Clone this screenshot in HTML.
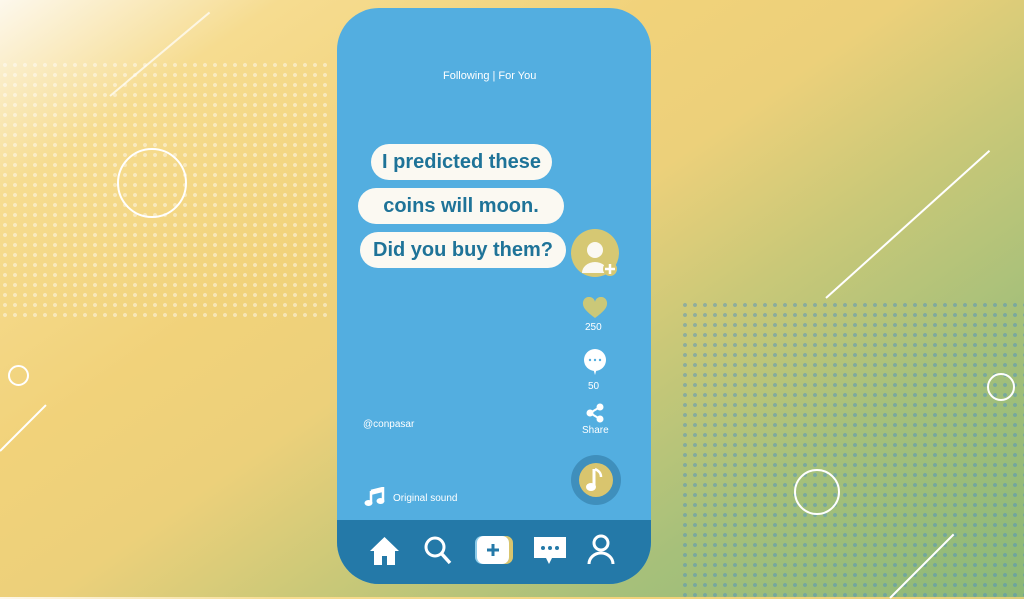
<!DOCTYPE html>
<html><head><meta charset="utf-8"><style>
body{margin:0;width:1024px;height:597px;overflow:hidden;position:relative;font-family:"Liberation Sans",sans-serif;
background:linear-gradient(145deg,#fdf8ec 0%,#f6dc90 15%,#f1d27a 35%,#ecd07a 48%,#c9c878 62%,#a6c07a 78%,#8cb878 100%);}
.dots{position:absolute;background-image:radial-gradient(circle,rgba(255,255,255,.55) 1.8px,transparent 2.2px);background-size:10px 10px}
.dots2{position:absolute;background-image:radial-gradient(circle,rgba(70,140,200,.55) 1.8px,transparent 2.2px);background-size:10px 10px}
.ring{position:absolute;border:2px solid #fff;border-radius:50%}
.line{position:absolute;height:2px;background:#fff;transform-origin:left center}
.phone{position:absolute;left:337px;top:8px;width:314px;height:576px;background:#53aee0;border-radius:42px;overflow:hidden}
.bar{position:absolute;left:0;bottom:0;width:100%;height:64px;background:#2479a8}
.bub{position:absolute;background:#fbf9f2;border-radius:18px;color:#1e7398;font-weight:bold;font-size:20px;text-align:center;line-height:36px;height:36px}
.w{position:absolute;color:#fff;font-size:10px}
</style></head><body>
<div class="dots" style="left:0;top:60px;width:330px;height:260px;opacity:.8"></div>
<div class="dots2" style="left:680px;top:300px;width:344px;height:297px;opacity:.8"></div>
<div class="ring" style="left:117px;top:148px;width:66px;height:66px"></div>
<div class="ring" style="left:8px;top:365px;width:17px;height:17px"></div>
<div class="ring" style="left:987px;top:373px;width:24px;height:24px"></div>
<div class="ring" style="left:794px;top:469px;width:42px;height:42px"></div>
<div class="line" style="left:826px;top:297px;width:220px;transform:rotate(-42deg)"></div>
<div class="line" style="left:0;top:450px;width:65px;transform:rotate(-45deg)"></div>
<div class="line" style="left:110px;top:95px;width:130px;transform:rotate(-40deg);opacity:.7"></div>
<div class="line" style="left:890px;top:597px;width:90px;transform:rotate(-45deg)"></div>
<div class="phone">
 <div class="w" style="left:106px;top:62px;font-size:11px">Following | For You</div>
 <div class="bub" style="left:34px;top:136px;width:181px">I predicted these</div>
 <div class="bub" style="left:21px;top:180px;width:206px">coins will moon.</div>
 <div class="bub" style="left:23px;top:224px;width:206px">Did you buy them?</div>
 <svg style="position:absolute;left:233px;top:220px" width="50" height="52"><circle cx="25" cy="25" r="24" fill="#d6c873"/><circle cx="25" cy="22" r="8" fill="#fbf9f2"/><path d="M12 45a13 11 0 0 1 26 0z" fill="#fbf9f2"/><circle cx="40" cy="41" r="7" fill="#d6c873"/><path d="M40 36v10M35 41h10" stroke="#fff" stroke-width="2.5"/></svg>
 <svg style="position:absolute;left:245px;top:289px" width="26" height="22"><path d="M13 21C5 15 1 11 1 7a6 6 0 0 1 12-2 6 6 0 0 1 12 2c0 4-4 8-12 14z" fill="#cbc878"/></svg>
 <div class="w" style="left:248px;top:314px">250</div>
 <svg style="position:absolute;left:245px;top:340px" width="26" height="28"><circle cx="13" cy="12" r="11" fill="#fff"/><path d="M11 20h4l-2 7z" fill="#fff"/><circle cx="8" cy="12" r="1.2" fill="#53aee0"/><circle cx="13" cy="12" r="1.2" fill="#53aee0"/><circle cx="18" cy="12" r="1.2" fill="#53aee0"/></svg>
 <div class="w" style="left:251px;top:373px">50</div>
 <svg style="position:absolute;left:248px;top:395px" width="20" height="22"><path d="M15 4L5 10L15 16" stroke="#fff" stroke-width="2" fill="none"/><circle cx="15" cy="4" r="3.5" fill="#fff"/><circle cx="5" cy="10" r="3.5" fill="#fff"/><circle cx="15" cy="16" r="3.5" fill="#fff"/></svg>
 <div class="w" style="left:245px;top:417px">Share</div>
 <div class="w" style="left:26px;top:411px">@conpasar</div>
 <svg style="position:absolute;left:233px;top:447px" width="52" height="50"><circle cx="26" cy="25" r="25" fill="#3f8fbc"/><circle cx="26" cy="25" r="17" fill="#d9c56e"/><path d="M24 14v17" stroke="#fff" stroke-width="3"/><ellipse cx="21" cy="32" rx="5" ry="4" fill="#fff"/><path d="M25 14c4 2 6 4 6 8" stroke="#fff" stroke-width="2.5" fill="none"/></svg>
 <svg style="position:absolute;left:27px;top:479px" width="22" height="20"><path d="M7 4l12-3v12M7 4v12" stroke="#fff" stroke-width="2.5" fill="none"/><ellipse cx="4.5" cy="16" rx="4" ry="3" fill="#fff"/><ellipse cx="16.5" cy="14" rx="4" ry="3" fill="#fff"/><path d="M7 5l12-3v3L7 8z" fill="#fff"/></svg>
 <div class="w" style="left:56px;top:485px">Original sound</div>
 <div class="bar">
  <svg style="position:absolute;left:32px;top:16px" width="31" height="30"><path d="M15.5 1L1 15h4v14h8v-9h5v9h8V15h4z" fill="#fff"/></svg>
  <svg style="position:absolute;left:87px;top:16px" width="28" height="30"><circle cx="11" cy="11" r="9" stroke="#fff" stroke-width="3" fill="none"/><path d="M17 17l9 10" stroke="#fff" stroke-width="3.5"/></svg>
  <svg style="position:absolute;left:138px;top:16px" width="38" height="28"><rect x="4" y="0" width="34" height="28" rx="7" fill="#d9c56e"/><rect x="0" y="0" width="34" height="28" rx="7" fill="#8dcbe8"/><rect x="2" y="0" width="32" height="28" rx="7" fill="#fff"/><path d="M18 8v12M12 14h12" stroke="#2479a8" stroke-width="3"/></svg>
  <svg style="position:absolute;left:197px;top:17px" width="32" height="28"><path d="M0 0h32v21H18l-3 6-3-6H0z" fill="#fff"/><circle cx="9" cy="11" r="2" fill="#2479a8"/><circle cx="16" cy="11" r="2" fill="#2479a8"/><circle cx="23" cy="11" r="2" fill="#2479a8"/></svg>
  <svg style="position:absolute;left:250px;top:14px" width="28" height="32"><circle cx="14" cy="9" r="7" stroke="#fff" stroke-width="3" fill="none"/><path d="M2 30a12 11 0 0 1 24 0" stroke="#fff" stroke-width="3" fill="none"/></svg>
 </div>
</div>
</body></html>
